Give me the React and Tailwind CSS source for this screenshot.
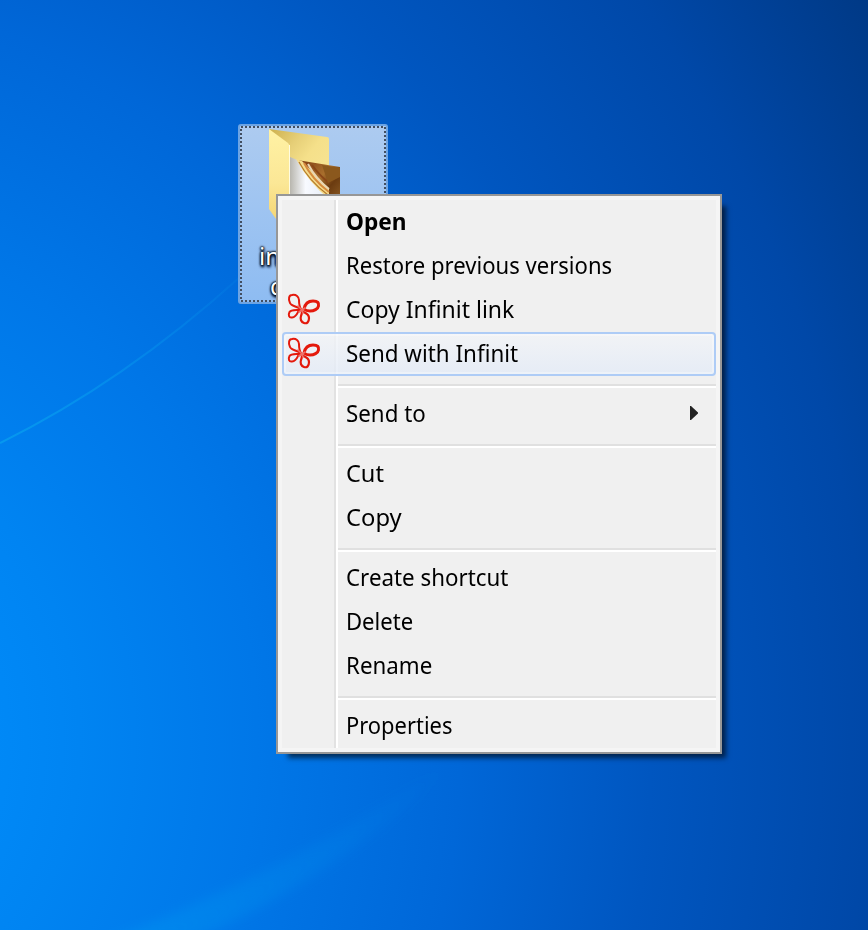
const groups = [
  [
    { label: 'Open', fit: 'font-bold scale-x-[0.945]' },
    { label: 'Restore previous versions', fit: 'scale-x-[0.92]' },
    { label: 'Copy Infinit link', fit: 'scale-x-[0.957]', icon: true },
    { label: 'Send with Infinit', fit: 'scale-x-[0.933]', icon: true, active: true },
  ],
  [{ label: 'Send to', fit: 'scale-x-[0.93]', submenu: true }],
  [
    { label: 'Cut', fit: 'scale-x-[0.98]' },
    { label: 'Copy', fit: 'scale-x-[0.99]' },
  ],
  [
    { label: 'Create shortcut', fit: 'scale-x-[0.93]' },
    { label: 'Delete', fit: 'scale-x-[0.92]' },
    { label: 'Rename', fit: 'scale-x-[0.93]' },
  ],
  [{ label: 'Properties', fit: 'scale-x-[0.913]' }],
];

function InfinitIcon() {
  return (
    <svg width="34" height="34" viewBox="0 0 34 34" fill="none" stroke="#e4190c" strokeLinejoin="round" strokeLinecap="round">
      <path strokeWidth="2" d="M14 16C9 13 4 13 3 10C1 6 2 2 5 2C9 1 12 4 12 7C12 10 12 13 14 16" />
      <path strokeWidth="3" d="M17 16C18 11 21 8 26 8C31 8 32 10 31.500 13C31 16 27 18 23 18C20 18 18 17 17 16" />
      <path strokeWidth="2" d="M14 17C9 17 4 16 2.500 19C1 22 2 25 5 24.500C9 24 10 21 11 19C12 18 13 17 14 17" />
      <path strokeWidth="2.200" d="M15 18C17 20 22 20 22 25C22 29 20 31 17 30C14 29 13 26 14 23C15 21 15 20 15 18" />
      <path stroke="#f07068" strokeWidth="1.600" d="M11 13L15 17L12 19M15 17L18 15M15 17L16 20" />
    </svg>
  );
}

function Wallpaper() {
  return (
    <svg className="absolute inset-0" width="868" height="930" viewBox="0 0 868 930" fill="none">
      <defs>
        <radialGradient id="sky" gradientUnits="userSpaceOnUse" cx="0" cy="0" r="1" gradientTransform="translate(-200 740) scale(1270 1430)">
          <stop offset="0.15" stopColor="#0089f7" />
          <stop offset="0.22" stopColor="#0084f2" />
          <stop offset="0.36" stopColor="#0077e8" />
          <stop offset="0.52" stopColor="#0067d8" />
          <stop offset="0.67" stopColor="#0056c0" />
          <stop offset="0.84" stopColor="#0048a8" />
          <stop offset="1" stopColor="#003883" />
        </radialGradient>
        <linearGradient id="arc" gradientUnits="userSpaceOnUse" x1="0" y1="440" x2="240" y2="280">
          <stop stopColor="#08a0ef" stopOpacity="0.75" />
          <stop offset="1" stopColor="#08a0ef" stopOpacity="0.1" />
        </linearGradient>
        <linearGradient id="beam" gradientUnits="userSpaceOnUse" x1="140" y1="930" x2="450" y2="770">
          <stop stopColor="#0096f0" stopOpacity="0.42" />
          <stop offset="1" stopColor="#0096f0" stopOpacity="0" />
        </linearGradient>
        <filter id="soft" x="-20%" y="-20%" width="140%" height="140%">
          <feGaussianBlur stdDeviation="6" />
        </filter>
      </defs>
      <rect width="868" height="930" fill="url(#sky)" />
      <path d="M0 443C75 406 157 352 240 277" stroke="url(#arc)" strokeWidth="2" />
      <path d="M95 945Q285 875 460 755Q340 880 180 945Z" fill="url(#beam)" filter="url(#soft)" />
    </svg>
  );
}

function Folder() {
  return (
    <svg className="ml-[29px] shrink-0" width="75" height="92" viewBox="0 0 75 92">
      <defs>
        <linearGradient id="back" x1="0" y1="0" x2="1" y2="1">
          <stop stopColor="#cdb04c" />
          <stop offset="0.3" stopColor="#e6cf78" />
          <stop offset="0.5" stopColor="#f5e08a" />
          <stop offset="1" stopColor="#f8e69a" />
        </linearGradient>
        <linearGradient id="front" x1="0" y1="0" x2="0" y2="1">
          <stop stopColor="#fff2a4" />
          <stop offset="0.6" stopColor="#fbe796" />
          <stop offset="1" stopColor="#f5d675" />
        </linearGradient>
        <linearGradient id="paper">
          <stop stopColor="#b8b6ae" />
          <stop offset="0.4" stopColor="#f8faff" />
          <stop offset="1" stopColor="#e4ebf5" />
        </linearGradient>
        <linearGradient id="photo" x1="0" y1="0" x2="1" y2="1">
          <stop stopColor="#7b3710" />
          <stop offset="0.45" stopColor="#a96f2d" />
          <stop offset="0.65" stopColor="#6b3b10" />
          <stop offset="1" stopColor="#96662b" />
        </linearGradient>
      </defs>
      <path d="M0 0L58 8Q60 8 60 10V75H20Z" fill="url(#back)" />
      <path d="M21 28L36 34L60 66V75H21Z" fill="url(#paper)" />
      <path d="M28 31L71 38V80H60V66Z" fill="url(#photo)" />
      <path d="M27 30L33 32L60 60V70Q40 54 27 30Z" fill="#f5dc8b" />
      <path d="M30 33Q40 52 59 66" stroke="#b57a2a" strokeWidth="1.2" fill="none" />
      <path d="M35 34Q43 50 60 63" stroke="#d5893e" strokeWidth="2" fill="none" />
      <path d="M39 35Q47 50 60 60" stroke="#e8d5b4" strokeWidth="2" fill="none" />
      <path d="M43 36Q50 46 60 54" stroke="#8a4618" strokeWidth="2" fill="none" />
      <path d="M53 36L71 39V48L59 54Z" fill="#8b581d" />
      <path d="M0 0L19 14Q21 16 21 19V86L7 90L0 80Z" fill="url(#front)" />
      <path d="M20.5 16V86" stroke="#fffce0" />
    </svg>
  );
}

function DesktopIcon() {
  return (
    <div className="absolute left-[238px] top-[124px] h-[180px] w-[150px] overflow-hidden rounded-[3px] border-2 border-[#6da4e3] bg-linear-to-b from-[#adcbf0] to-[#8ebcf2]">
      <svg className="absolute inset-0" width="146" height="176" viewBox="0 0 146 176" fill="none">
        <rect x="1" y="1" width="144" height="174" stroke="#424e60" strokeWidth="2" strokeDasharray="2 2" />
      </svg>
      <div className="relative flex flex-col pt-[3px] text-[24px] leading-[30px] text-white">
        <Folder />
        <span className="mt-5 ml-[19px] [text-shadow:0_0_2px_#000,0_0_3px_#000,1px_2px_3px_#001a40,0_2px_3px_#001a40,0_0_2px_#000]">in</span>
        <span className="ml-[30px] [text-shadow:0_0_2px_#000,0_0_3px_#000,1px_2px_3px_#001a40,0_2px_3px_#001a40,0_0_2px_#000]">d</span>
      </div>
    </div>
  );
}

function MenuItem({ label, fit, icon, submenu, active }) {
  return (
    <div
      className={
        active
          ? 'relative flex h-11 items-center rounded-[4px] border-2 border-[#aeccf6] bg-linear-to-b from-[#f2f4f7]/80 to-[#e3ebf7]/80 shadow-[inset_0_0_0_2px_rgba(255,255,255,0.3)]'
          : 'relative flex h-11 items-center border-2 border-transparent'
      }
    >
      <div className="flex w-[62px] shrink-0 items-center pl-[3px]">{icon && <InfinitIcon />}</div>
      <span className={`mb-[2px] origin-left whitespace-nowrap text-[24px] leading-[32px] text-black ${fit}`}>{label}</span>
      {submenu && (
        <svg className="mr-4 mb-[2px] ml-auto" width="8" height="14" viewBox="0 0 8 14" fill="#222">
          <path d="M0 0H1L8 6.500V7.500L1 14H0Z" />
        </svg>
      )}
    </div>
  );
}

function ContextMenu() {
  return (
    <div className="absolute left-[276px] top-[194px] w-[446px] border-2 border-[#979797] bg-[#f5f5f5] p-1 shadow-[8px_8px_5px_-4px_rgba(0,0,0,0.6)]">
      <div className="relative bg-[#f0f0f0]">
        <div className="absolute inset-y-0 left-[52px] w-1 border-r-2 border-l-2 border-r-white border-l-[#e2e2e2]" />
        {groups.map((items, i) => (
          <div key={items[0].label}>
            {i > 0 && (
              <div className="h-4 pt-2 pl-14">
                <div className="h-1 border-t-2 border-b-2 border-t-[#e0e0e0] border-b-white" />
              </div>
            )}
            {items.map((item) => (
              <MenuItem key={item.label} {...item} />
            ))}
          </div>
        ))}
      </div>
    </div>
  );
}

export default function App() {
  return (
    <main className="relative h-[930px] w-[868px] overflow-hidden bg-[#0067d6] font-['Noto_Sans','Open_Sans',sans-serif]">
      <Wallpaper />
      <DesktopIcon />
      <ContextMenu />
    </main>
  );
}
